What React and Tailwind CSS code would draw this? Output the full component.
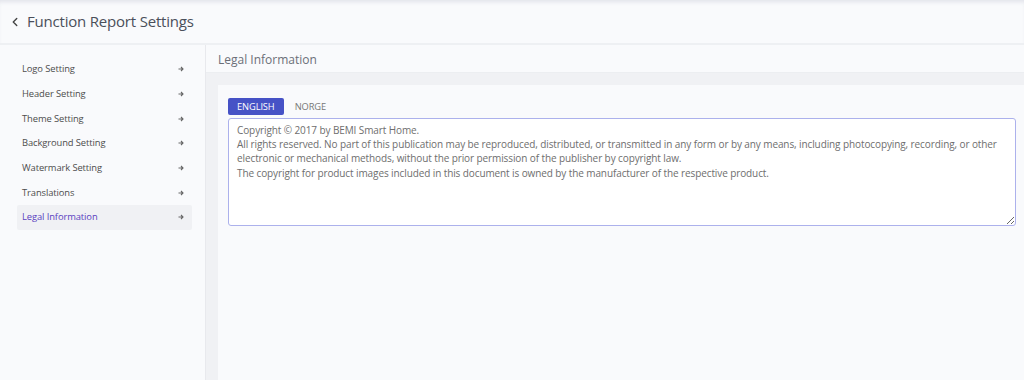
import { ChevronLeft } from 'lucide-react';

const items = [
    'Logo Setting',
    'Header Setting',
    'Theme Setting',
    'Background Setting',
    'Watermark Setting',
    'Translations',
    'Legal Information',
];

function Arrow() {
    return (
        <svg width="6" height="6" viewBox="0 0 6 6" className="shrink-0">
            <path d="M0.5 3h4.5M3 1l2 2-2 2" fill="none" stroke="#666" strokeWidth="1.1" />
        </svg>
    );
}

export default function App() {
    const text = `Copyright © 2017 by BEMI Smart Home.
All rights reserved. No part of this publication may be reproduced, distributed, or transmitted in any form or by any means, including photocopying, recording, or other electronic or mechanical methods, without the prior permission of the publisher by copyright law.
The copyright for product images included in this document is owned by the manufacturer of the respective product.`;

    return (
        <div className="w-[1024px] h-[380px] flex flex-col bg-[#f9fafc] overflow-hidden" style={{ fontFamily: '"Open Sans", "Liberation Sans", sans-serif' }}>
            {/* ── Top bar ── */}
            <div className="h-[45px] shrink-0 flex items-center pl-[8px] gap-[5px] border-b-2 border-[#eef0f3] shadow-[inset_0_4px_4px_-2px_#e1e3ea]">
                <ChevronLeft size={14} strokeWidth={2.4} className="text-[#444]" />
                <span className="text-[15px] tracking-[-0.2px] text-[#4a4f5a]">Function Report Settings</span>
            </div>

            <div className="flex flex-1 min-h-0">
                {/* ── Sidebar ── */}
                <div className="w-[206px] shrink-0 pt-[12px] pl-[17px] pr-[13px] border-r border-[#e8e9ed]">
                    {items.map((it, i) => {
                        const active = i === items.length - 1;
                        return (
                            <div
                                key={it}
                                className={`h-[24.7px] flex items-center justify-between pl-[5px] pr-[8px] rounded-[2px] ${active ? 'bg-[#f0f1f4]' : ''}`}
                            >
                                <span className={`text-[9.4px] tracking-[-0.1px] ${active ? 'text-[#5a3fc0]' : 'text-[#4d4d4d]'}`}>{it}</span>
                                <Arrow />
                            </div>
                        );
                    })}
                </div>

                {/* ── Content ── */}
                <div className="flex-1 flex flex-col bg-[#f0f1f4]">
                    <div className="h-[28px] shrink-0 flex items-center pl-[12px] pt-[3px] bg-[#f9fafc] border-b border-[#eceef1]">
                        <span className="text-[12px] text-[#6b6f78]">Legal Information</span>
                    </div>
                    <div className="flex-1 pt-[12px] pl-[12px]">
                        <div className="h-full bg-[#f9fafc] pt-[13px] pl-[10px] pr-[8px]">
                            <div className="flex items-center gap-[11px] mb-[3px]">
                                <span className="h-[17px] px-[9px] flex items-center bg-[#4652c6] text-white text-[9.3px] tracking-[-0.1px] rounded-[2px]">ENGLISH</span>
                                <span className="text-[9.3px] tracking-[-0.1px] text-[#777]">NORGE</span>
                            </div>
                            <textarea
                                readOnly
                                value={text}
                                className="w-full h-[108px] block bg-white border-[1.5px] border-[#acb1ec] rounded-[3px] px-[8px] pt-[4px] text-[10px] tracking-[-0.1px] leading-[14.2px] text-[#6e6e6e] resize-y focus:outline-none"
                            />
                        </div>
                    </div>
                </div>
            </div>
        </div>
    );
}
